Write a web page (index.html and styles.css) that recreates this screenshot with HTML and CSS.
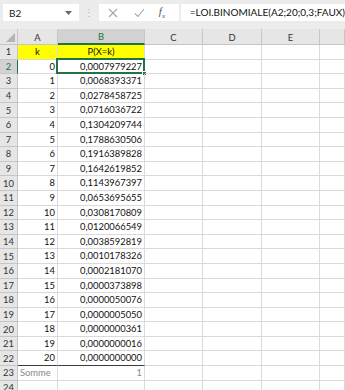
FILE: index.html
```html
<!DOCTYPE html>
<html lang="fr">
<head>
    <meta charset="UTF-8">
    <title>Loi binomiale</title>
    <link rel="stylesheet" href="styles.css">
</head>
<body>
    <!-- Formula bar -->
    <div class="topbar">
        <div class="namebox">
            <span>B2</span>
            <svg class="drop" width="7" height="4" viewBox="0 0 7 4"><path d="M0 0h7L3.5 4z" fill="#666"/></svg>
        </div>
        <div class="grip">⋮</div>
        <div class="fxbox">
            <svg width="10" height="10" viewBox="0 0 10 10"><path d="M1 1l8 8M9 1L1 9" stroke="#a6a6a6" stroke-width="1.1" fill="none"/></svg>
            <svg width="11" height="10" viewBox="0 0 11 10"><path d="M1 5.5l3 3L10 1" stroke="#a6a6a6" stroke-width="1.1" fill="none"/></svg>
            <span class="fx"><i>f</i><sub>x</sub></span>
        </div>
        <div class="formula">=LOI.BINOMIALE(A2;20;0,3;FAUX)</div>
    </div>

    <!-- Sheet -->
    <div class="sheet" id="sheet"></div>

    <script>
        const probs = [
            '0,0007979227', '0,0068393371', '0,0278458725', '0,0716036722',
            '0,1304209744', '0,1788630506', '0,1916389828', '0,1642619852',
            '0,1143967397', '0,0653695655', '0,0308170809', '0,0120066549',
            '0,0038592819', '0,0010178326', '0,0002181070', '0,0000373898',
            '0,0000050076', '0,0000005050', '0,0000000361', '0,0000000016',
            '0,0000000000'
        ];
        const sheet = document.getElementById('sheet');
        let html = '<div class="hd corner"><span class="tri"></span></div>';
        ['A', 'B', 'C', 'D', 'E', ''].forEach(c => {
            html += `<div class="hd col${c === 'B' ? ' sel' : ''}">${c}</div>`;
        });

        function row(n, a, b, extra) {
            let r = `<div class="hd rown${n === 2 ? ' sel' : ''}">${n}</div>`;
            r += `<div class="cell ${extra.a || ''}">${a}</div>`;
            r += `<div class="cell ${extra.b || ''}">${b}</div>`;
            for (let i = 0; i < 4; i++) r += '<div class="cell"></div>';
            return r;
        }

        html += row(1, 'k', 'P(X=k)', { a: 'yellow center', b: 'yellow center' });
        probs.forEach((p, k) => {
            const last = k === probs.length - 1 ? ' total-top' : '';
            const b = k === 0 ? p + '<span class="active"><i></i></span>' : p;
            html += row(k + 2, k, b, { a: 'num' + last, b: 'num' + last + (k === 0 ? ' current' : '') });
        });
        html += row(23, 'Somme', '1', { a: 'muted', b: 'num muted' });
        html += row(24, '', '', {});
        sheet.innerHTML = html;
    </script>
</body>
</html>
```

FILE: styles.css
```css
body {
    margin: 0;
    height: 390px;
    overflow: hidden;
    background: #fff;
    font-family: Lato, "Liberation Sans", sans-serif;
    color: #111;
}

/* formula bar */
.topbar {
    height: 29px;
    box-sizing: border-box;
    background: #ececec;
    display: flex;
    align-items: flex-start;
    padding-top: 4px;
}
.namebox {
    width: 77px;
    height: 17px;
    margin-left: 3px;
    background: #fff;
    display: flex;
    align-items: center;
    justify-content: space-between;
    padding: 0 7px 0 6px;
    box-sizing: border-box;
    font-size: 10px;
    color: #222;
}
.grip {
    width: 20px;
    text-align: center;
    color: #b0b0b0;
    font-size: 10px;
    line-height: 17px;
}
.fxbox {
    width: 81px;
    height: 17px;
    background: #fff;
    display: flex;
    align-items: center;
    gap: 16px;
    padding-left: 9px;
    box-sizing: border-box;
}
.fx {
    font-family: "Liberation Serif", serif;
    font-size: 11px;
    color: #555;
    margin-left: -2px;
}
.fx sub {
    font-size: 7px;
    font-style: italic;
}
.formula {
    flex: 1;
    height: 17px;
    margin-left: 2px;
    background: #fff;
    padding-left: 9px;
    font-size: 10px;
    line-height: 17px;
    color: #111;
    white-space: nowrap;
}

/* grid */
.sheet {
    display: grid;
    grid-template-columns: 18px 40px 87px 58px 59px 58px 1fr;
    grid-template-rows: 16px;
    grid-auto-rows: 14.6px;
    font-size: 9.4px;
}
.hd {
    background: #e6e6e6;
    color: #333;
    box-sizing: border-box;
    border-right: 1px solid #c6c6c6;
    border-bottom: 1px solid #c6c6c6;
    display: flex;
    align-items: center;
    justify-content: center;
}
.col {
    padding-top: 1px;
}
.corner {
    position: relative;
}
.tri {
    position: absolute;
    right: 2px;
    bottom: 2px;
    width: 0;
    height: 0;
    border-left: 9px solid transparent;
    border-bottom: 9px solid #b4b4b4;
}
.hd.sel {
    background: #d2d2d2;
    color: #217346;
}
.col.sel {
    border-bottom: 2px solid #217346;
}
.rown.sel {
    border-right-color: #217346;
}
.cell {
    box-sizing: border-box;
    border-right: 1px solid #dadada;
    border-bottom: 1px solid #dadada;
    padding: 0 2px;
    line-height: 13.6px;
    white-space: nowrap;
    position: relative;
}
.num {
    text-align: right;
}
.center {
    text-align: center;
}
.yellow {
    background: #ffff00;
}
.muted {
    color: #8a8a8a;
}
.total-top {
    border-bottom: 1px solid #3c3c3c;
}

/* active cell outline */
.active {
    position: absolute;
    left: -2px;
    top: -2px;
    right: -1px;
    bottom: -1px;
    border: 2px solid #217346;
}
.active i {
    position: absolute;
    right: -4px;
    bottom: -4px;
    width: 5px;
    height: 5px;
    background: #217346;
    border: 1px solid #fff;
    box-sizing: border-box;
}
```
